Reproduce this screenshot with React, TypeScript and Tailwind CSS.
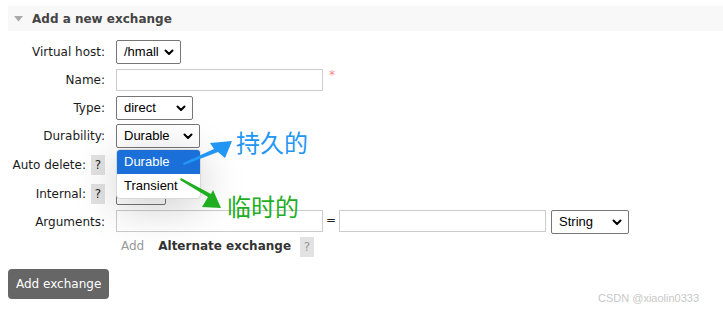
import React from "react";

const Chevron = () => (
  <svg width="10" height="7" viewBox="0 0 10 7" className="shrink-0">
    <path d="M1.5 1.5 L5 5 L8.5 1.5" fill="none" stroke="#000" strokeWidth="2" strokeLinecap="round" strokeLinejoin="round" />
  </svg>
);

function Sel({ text, w, h = 24 }: { text: string; w: number; h?: number }) {
  return (
    <div
      className="flex items-center justify-between border border-[#767676] rounded-[2px] bg-white pl-[7px] pr-[6px] text-[13px] text-black"
      style={{ width: w, height: h, fontFamily: '"Liberation Sans", Arial, sans-serif' }}
    >
      <span>{text}</span>
      <Chevron />
    </div>
  );
}

const Help = ({ light }: { light?: boolean }) => (
  <span
    className={`inline-flex items-center justify-center w-[14px] h-[20px] bg-[#e2e2e2] text-[12px] ${light ? "text-[#999]" : "text-[#222]"}`}
  >
    ?
  </span>
);

export default function App() {
  const label = "w-[97px] flex justify-end items-center gap-[5px] text-[12px] text-[#1a1a1a] shrink-0";
  return (
    <div
      className="relative w-[723px] h-[309px] bg-white overflow-hidden"
      style={{ fontFamily: '"DejaVu Sans", Verdana, sans-serif' }}
    >
      <div className="mt-[6px] ml-[8px] h-[25px] bg-[#f8f8f8] flex items-center">
        <svg width="9" height="6" viewBox="0 0 9 6" className="ml-[6px]">
          <path d="M0 0 L9 0 L4.5 5.5 Z" fill="#aaa" />
        </svg>
        <span className="ml-[9px] text-[12px] font-bold text-[#444]">Add a new exchange</span>
      </div>

      <div className="ml-[8px] mt-[7px] flex flex-col">
        <div className="flex items-center h-[28px]">
          <div className={label}>Virtual host:</div>
          <div className="ml-[11px]"><Sel text="/hmall" w={65} /></div>
        </div>
        <div className="flex items-center h-[28px]">
          <div className={label}>Name:</div>
          <div className="ml-[11px] flex items-start">
            <div className="w-[207px] h-[22px] border border-[#ccc] bg-white" />
            <span className="ml-[6px] -mt-[3px] text-[12px] text-[#f88]">*</span>
          </div>
        </div>
        <div className="flex items-center h-[28px]">
          <div className={label}>Type:</div>
          <div className="ml-[11px]"><Sel text="direct" w={77} /></div>
        </div>
        <div className="flex items-center h-[28px]">
          <div className={label}>Durability:</div>
          <div className="ml-[11px]"><Sel text="Durable" w={84} /></div>
        </div>
        <div className="flex items-center h-[30px]">
          <div className={label}>Auto delete: <Help /></div>
          <div className="ml-[11px]"><Sel text="" w={50} /></div>
        </div>
        <div className="flex items-center h-[28px]">
          <div className={label}>Internal: <Help /></div>
          <div className="ml-[11px]"><Sel text="" w={50} h={22} /></div>
        </div>
        <div className="flex items-center h-[28px]">
          <div className={label}>Arguments:</div>
          <div className="ml-[11px] flex items-start">
            <div className="w-[207px] h-[22px] border border-[#ccc] bg-white" />
            <span className="mx-[3px] text-[12px] text-[#222] leading-[20px]">=</span>
            <div className="w-[207px] h-[22px] border border-[#ccc] bg-white" />
            <div className="ml-[5px]"><Sel text="String" w={78} h={24} /></div>
          </div>
        </div>
        <div className="flex items-center h-[20px]">
          <div className="w-[97px] shrink-0" />
          <div className="ml-[16px] flex items-center">
            <span className="text-[12px] text-[#999]">Add</span>
            <span className="ml-[14px] text-[12px] font-bold text-[#333]">Alternate exchange</span>
            <span className="ml-[9px]"><Help light /></span>
          </div>
        </div>
        <div className="mt-[13px]">
          <button className="h-[30px] px-[8px] rounded-[4px] bg-[#666] text-white text-[12px]">Add exchange</button>
        </div>
      </div>

      {/* open dropdown */}
      <div
        className="absolute left-[116px] top-[149px] w-[85px] rounded-[4px] bg-white overflow-hidden shadow-[0_8px_44px_rgba(0,0,0,0.2)] border border-[#d8d8d8] text-[13px]"
        style={{ fontFamily: '"Liberation Sans", Arial, sans-serif' }}
      >
        <div className="h-[24px] flex items-center pl-[7px] bg-[#1a6fd8] text-white">Durable</div>
        <div className="h-[24px] flex items-center pl-[7px] text-black">Transient</div>
      </div>

      {/* annotations */}
      <svg className="absolute left-0 top-0" width="723" height="309" viewBox="0 0 723 309">
        <path d="M183 163 L214 149 L210 143 L232 141 L225 158 L218 152 L184 165 Z" fill="#2196f3" />
        <path d="M180 180 L208 197 L202 207 L221 208 L213 190 L211 194 L181 178 Z" fill="#1fae1f" />
      </svg>
      <div
        className="absolute left-[236px] top-[130px] text-[24px] leading-none text-[#2196f3]"
        style={{ fontFamily: '"Noto Sans CJK SC", sans-serif' }}
      >
        持久的
      </div>
      <div
        className="absolute left-[227px] top-[194px] text-[24px] leading-none text-[#1fae1f]"
        style={{ fontFamily: '"Noto Sans CJK SC", sans-serif' }}
      >
        临时的
      </div>

      <div
        className="absolute left-[598px] top-[290px] text-[11px] text-[#c8c8c8]"
        style={{ fontFamily: '"Liberation Sans", Arial, sans-serif' }}
      >
        CSDN @xiaolin0333
      </div>
    </div>
  );
}
